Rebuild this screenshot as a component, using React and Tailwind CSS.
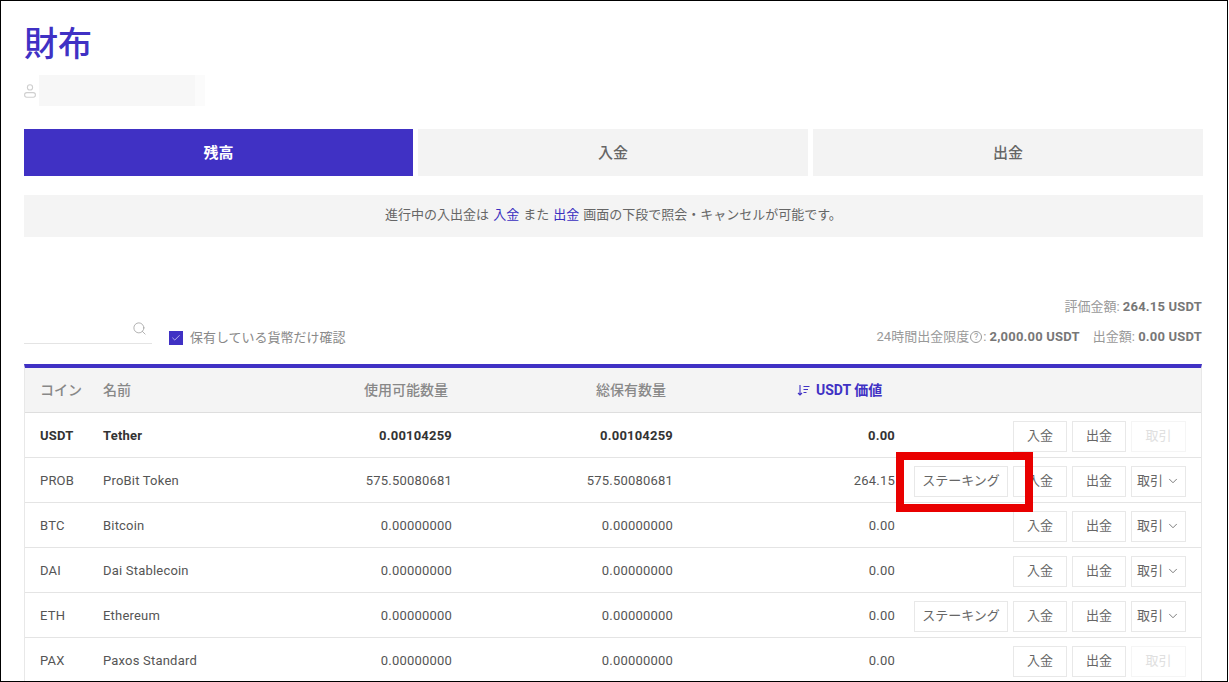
import React from "react";
import { Search, Check, ChevronDown } from "lucide-react";

const rows = [
  { c: "USDT", n: "Tether", a: "0.00104259", t: "0.00104259", v: "0.00", bold: true, off: true },
  { c: "PROB", n: "ProBit Token", a: "575.50080681", t: "575.50080681", v: "264.15", stake: true },
  { c: "BTC", n: "Bitcoin", a: "0.00000000", t: "0.00000000", v: "0.00" },
  { c: "DAI", n: "Dai Stablecoin", a: "0.00000000", t: "0.00000000", v: "0.00" },
  { c: "ETH", n: "Ethereum", a: "0.00000000", t: "0.00000000", v: "0.00", stake: true },
  { c: "PAX", n: "Paxos Standard", a: "0.00000000", t: "0.00000000", v: "0.00", off: true },
];

function Btn({ children, className = "border-[#e8e8e8] text-[#666]" }) {
  return (
    <button className={`h-[31px] flex items-center justify-center border bg-white text-[13px] ${className}`}>
      {children}
    </button>
  );
}

function Row({ r }) {
  return (
    <div className={`h-[45px] shrink-0 flex items-center pt-[2px] border-b border-[#e4e4e4] text-[13px] tracking-[0.2px] ${r.bold ? "font-bold text-[#333]" : "text-[#555]"}`}>
      <div className="w-[63px] ml-[15px] shrink-0">{r.c}</div>
      <div className="w-[160px] shrink-0">{r.n}</div>
      <div className="w-[189px] shrink-0 text-right">{r.a}</div>
      <div className="w-[221px] shrink-0 text-right">{r.t}</div>
      <div className="w-[222px] shrink-0 text-right">{r.v}</div>
      <div className="flex-1 flex justify-end gap-[5px] pr-[15px] tracking-normal font-normal">
        {r.stake && <Btn className="w-[94px] border-[#e8e8e8] text-[#666]">ステーキング</Btn>}
        <Btn className="w-[54px] border-[#e8e8e8] text-[#666]">入金</Btn>
        <Btn className="w-[54px] border-[#e8e8e8] text-[#666]">出金</Btn>
        {r.off ? (
          <Btn className="w-[55px] border-[#f5f5f5] text-[#e0e0e0]">取引</Btn>
        ) : (
          <Btn className="w-[55px] gap-[3px] border-[#e8e8e8] text-[#666]">
            取引
            <ChevronDown size={14} strokeWidth={1.3} className="text-[#555]" />
          </Btn>
        )}
      </div>
    </div>
  );
}

export default function App() {
  return (
    <div className="relative w-[1228px] h-[682px] overflow-hidden bg-white border border-black font-['Roboto','Noto_Sans_CJK_JP',sans-serif]">
      <div className="pl-[23px] pr-[24px] pt-[21px]">
        <h1 className="h-[44px] text-[34px] leading-[44px] font-medium text-[#4031c4]">財布</h1>

        <div className="mt-[8px] h-[32px] flex items-center">
          <svg width="12" height="14" viewBox="0 0 12 14" fill="none" stroke="#cfcfcf" strokeWidth="1.1" className="mt-[1px]">
            <circle cx="6" cy="3.4" r="2.6" />
            <rect x="0.6" y="8.6" width="10.8" height="4.6" rx="2.2" />
          </svg>
          <div className="ml-[3px] w-[156px] h-[31px] bg-[#f7f7f7]" />
          <div className="w-[10px] h-[31px] bg-[#fbfbfb]" />
        </div>

        <div className="mt-[23px] flex gap-[5px] h-[47px]">
          <div className="w-[389px] flex items-center justify-center pt-[2px] bg-[#4031c4] text-white text-[15px] font-bold">残高</div>
          <div className="w-[390px] flex items-center justify-center pt-[2px] bg-[#f3f3f3] text-[#666] text-[15px] font-medium">入金</div>
          <div className="flex-1 flex items-center justify-center pt-[2px] bg-[#f3f3f3] text-[#666] text-[15px] font-medium">出金</div>
        </div>

        <div className="mt-[19px] h-[42px] flex items-center justify-center pb-[2px] bg-[#f4f4f4] text-[13px] text-[#666] gap-[4px]">
          <span>進行中の入出金は</span>
          <span className="text-[#3a2fc0]">入金</span>
          <span>また</span>
          <span className="text-[#3a2fc0]">出金</span>
          <span>画面の下段で照会・キャンセルが可能です。</span>
        </div>

        <div className="mt-[55px] h-[72px] flex justify-between">
          <div className="flex items-start pt-[25px]">
            <div className="w-[128px] h-[27px] border-b border-[#e4e4e4] flex justify-end pr-[5px] pt-[4px]">
              <Search size={15} strokeWidth={1.2} className="text-[#999]" />
            </div>
            <div className="ml-[17px] mt-[11px] flex items-center gap-[7px] text-[13px] text-[#888]">
              <span className="w-[14px] h-[14px] bg-[#4031c4] flex items-center justify-center">
                <Check size={10} strokeWidth={1.5} className="text-white" />
              </span>
              保有している貨幣だけ確認
            </div>
          </div>
          <div className="flex flex-col items-end text-[13px] text-[#999] pt-[5px] pr-[1px]">
            <div className="h-[20px] flex items-center">
              評価金額:&nbsp;<b className="text-[#777] tracking-[0.2px]">264.15 USDT</b>
            </div>
            <div className="mt-[10px] h-[20px] flex items-center">
              24時間出金限度
              <span className="w-[12px] h-[12px] mx-[1px] border border-[#999] rounded-full text-[9px] leading-[10px] text-center">?</span>
              :&nbsp;<b className="text-[#777] tracking-[0.2px]">2,000.00 USDT</b>
              <span className="ml-[13px]">出金額:&nbsp;</span>
              <b className="text-[#777] tracking-[0.2px]">0.00 USDT</b>
            </div>
          </div>
        </div>

        <div className="mr-[1px] border-t-[4px] border-[#4031c4] h-[320px] flex flex-col border-x border-x-[#e8e8e8]">
          <div className="h-[45px] shrink-0 flex items-center bg-[#f4f4f4] border-b border-[#dedede] text-[14px] font-medium text-[#888]">
            <div className="w-[63px] ml-[15px] shrink-0">コイン</div>
            <div className="w-[160px] shrink-0">名前</div>
            <div className="w-[185px] shrink-0 text-right">使用可能数量</div>
            <div className="w-[218px] shrink-0 text-right">総保有数量</div>
            <div className="ml-[131px] flex items-center gap-[6px] text-[#4031c4]">
              <svg width="13" height="12" viewBox="0 0 13 12" fill="none" stroke="currentColor" strokeWidth="1.1">
                <path d="M3 1v10M1 9l2 2 2-2M6.5 2.5h6M6.5 5.5h4.5M6.5 8.5h3" />
              </svg>
              <span className="font-bold">USDT 価値</span>
            </div>
          </div>
          {rows.map((r) => (
            <Row key={r.c} r={r} />
          ))}
        </div>
      </div>

      <div className="absolute left-[895px] top-[451px] w-[137px] h-[60px] border-[8px] border-[#e90000]" />
    </div>
  );
}
